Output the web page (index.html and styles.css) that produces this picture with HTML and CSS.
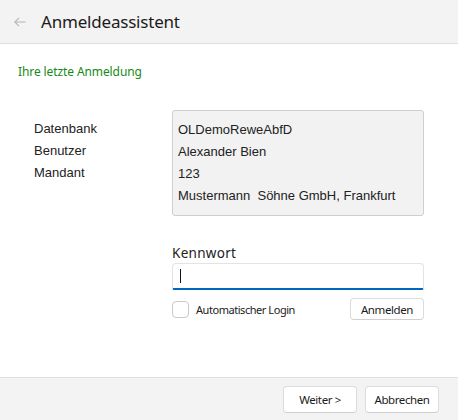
FILE: index.html
```html
<!DOCTYPE html>
<html lang="de">

<head>
    <meta charset="UTF-8">
    <title>Anmeldeassistent</title>
    <link rel="stylesheet" href="styles.css">
</head>

<body>
    <div class="wizard">
        <div class="wizard-header">
            <span class="back-arrow">
                <svg width="12" height="10" viewBox="0 0 12 10">
                    <path d="M11.5 5H1M5 0.8L0.8 5L5 9.2" fill="none" stroke="#b5b5b5" stroke-width="1.1" />
                </svg>
            </span>
            <span class="wizard-title">Anmeldeassistent</span>
        </div>

        <div class="wizard-body">
            <div class="section-title">Ihre letzte Anmeldung</div>

            <div class="last-login">
                <div class="login-labels">
                    <div>Datenbank</div>
                    <div>Benutzer</div>
                    <div>Mandant</div>
                </div>
                <div class="login-values">
                    <div>OLDemoReweAbfD</div>
                    <div>Alexander Bien</div>
                    <div>123</div>
                    <div>Mustermann&nbsp; Söhne GmbH, Frankfurt</div>
                </div>
            </div>

            <div class="password-block">
                <label class="field-label" for="pw">Kennwort</label>
                <div class="password-input">
                    <span class="caret"></span>
                </div>
                <div class="password-actions">
                    <label class="auto-login">
                        <span class="checkbox"></span>
                        Automatischer Login
                    </label>
                    <button class="btn btn-small">Anmelden</button>
                </div>
            </div>
        </div>

        <div class="wizard-footer">
            <button class="btn">Weiter &gt;</button>
            <button class="btn">Abbrechen</button>
        </div>
    </div>
</body>

</html>
```

FILE: styles.css
```css
* {
    margin: 0;
    padding: 0;
    box-sizing: border-box;
}

body {
    font-family: 'Noto Sans', 'Open Sans', sans-serif;
    background: white;
    color: #1b1b1b;
    width: 458px;
    height: 420px;
    overflow: hidden;
}

.wizard {
    height: 420px;
    display: flex;
    flex-direction: column;
}

.wizard-header {
    height: 44px;
    background: #f3f3f3;
    border-bottom: 1px solid #dedede;
    display: flex;
    align-items: center;
    padding-left: 14px;
}

.back-arrow {
    display: flex;
    width: 27px;
}

.wizard-title {
    font-size: 17px;
    letter-spacing: -0.2px;
    color: #1b1b1b;
}

.wizard-body {
    flex: 1;
    padding: 20px 34px 0 18px;
}

.section-title {
    font-size: 12px;
    color: #168a16;
    letter-spacing: -0.1px;
    line-height: 16px;
}

.last-login {
    display: flex;
    margin-top: 30px;
    font-family: 'Liberation Sans', Arial, sans-serif;
    font-size: 13px;
    line-height: 22px;
    color: #222;
}

.login-labels {
    width: 154px;
    padding: 8px 0 0 16px;
}

.login-values {
    flex: 1;
    height: 106px;
    padding: 8px 5px;
    background: #f2f2f2;
    border: 1px solid #cfcfcf;
    border-radius: 3px;
}

.password-block {
    margin: 28px 0 0 154px;
}

.field-label {
    display: block;
    font-size: 13.5px;
    letter-spacing: 0.3px;
    line-height: 18px;
    color: #222;
}

.password-input {
    margin-top: 1px;
    height: 27px;
    background: white;
    border: 1px solid #e3e3e3;
    border-bottom: 2px solid #0067c0;
    border-radius: 4px 4px 2px 2px;
    display: flex;
    align-items: center;
    padding-left: 7px;
}

.caret {
    width: 1px;
    height: 14px;
    background: #111;
}

.password-actions {
    display: flex;
    justify-content: space-between;
    align-items: center;
    margin-top: 8px;
}

.auto-login {
    display: flex;
    align-items: center;
    gap: 7px;
    font-size: 11px;
    letter-spacing: -0.45px;
    color: #222;
}

.checkbox {
    width: 17px;
    height: 17px;
    border: 1px solid #c9c9c9;
    border-radius: 4px;
    background: white;
}

.btn {
    font-family: 'Noto Sans', 'Open Sans', sans-serif;
    font-size: 11.5px;
    letter-spacing: -0.4px;
    color: #1b1b1b;
    background: white;
    border: 1px solid #dcdcdc;
    border-bottom-color: #cfcfcf;
    border-radius: 4px;
    width: 74px;
    height: 27px;
    cursor: pointer;
}

.btn-small {
    height: 22px;
}

.wizard-footer {
    height: 43px;
    background: #f3f3f3;
    border-top: 1px solid #e0e0e0;
    display: flex;
    justify-content: flex-end;
    align-items: center;
    gap: 8px;
    padding-right: 19px;
}
```
